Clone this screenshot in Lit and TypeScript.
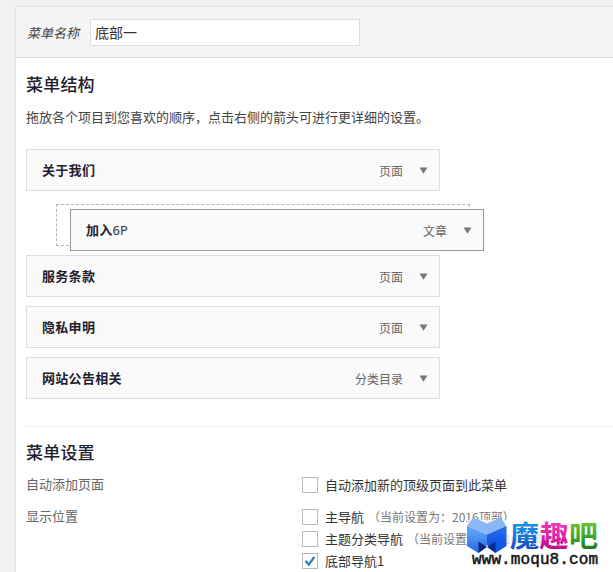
import { LitElement, html, css, svg } from "lit";
import { customElement, property } from "lit/decorators.js";
import { classMap } from "lit/directives/class-map.js";

@customElement("menu-item")
class MenuItem extends LitElement {
  @property() label = "";
  @property() suffix = "";
  @property() kind = "";
  @property({ type: Boolean }) dragging = false;

  static styles = css`
    :host { display: block; }
    .bar {
      box-sizing: border-box;
      display: flex;
      align-items: center;
      width: 414px;
      height: 42px;
      padding: 0 11px 0 15px;
      border: 1px solid #dedede;
      background: #fafafa;
    }
    .dragging { border-color: #999; }
    .title {
      flex: 1;
      font-size: 13px;
      font-weight: 700;
      letter-spacing: 0.3px;
      color: #23202e;
      line-height: 20px;
    }
    .suffix {
      font-family: "Noto Sans", sans-serif;
      font-weight: 400;
      letter-spacing: 0;
      color: #333;
    }
    .kind { font-size: 12px; line-height: 20px; color: #666; margin-right: 16px; padding-top: 1px; }
    .arrow { display: block; width: 9px; height: 7px; fill: #777; }
  `;

  render() {
    return html`<div class=${classMap({ bar: true, dragging: this.dragging })}>
      <span class="title">${this.label}<span class="suffix">${this.suffix}</span></span>
      <span class="kind">${this.kind}</span>
      <svg class="arrow" viewBox="0 0 9 7"><path d="M.5 .5h8L4.5 6.7z" /></svg>
    </div>`;
  }
}

@customElement("check-option")
class CheckOption extends LitElement {
  @property() label = "";
  @property() note = "";
  @property({ type: Boolean }) checked = false;

  static styles = css`
    :host { display: flex; align-items: center; height: 22px; white-space: nowrap; }
    .box {
      box-sizing: border-box;
      flex: none;
      width: 16px;
      height: 16px;
      border: 1px solid #b9b9b9;
      background: #fff;
      margin-right: 7px;
    }
    .box svg { display: block; width: 14px; height: 14px; }
    .label { font-size: 13px; line-height: 20px; color: #333; }
    .note { font-size: 12px; line-height: 20px; color: #777; margin-left: 4px; }
  `;

  render() {
    return html`<span class="box">${this.checked
        ? html`<svg viewBox="0 0 14 14"><path d="M2.5 6.8l3.2 3.8 5.6-7.6" fill="none" stroke="#2583b5" stroke-width="2.2" /></svg>`
        : ""}</span
      ><span class="label">${this.label}</span>${this.note ? html`<span class="note">${this.note}</span>` : ""}`;
  }
}

@customElement("site-mark")
class SiteMark extends LitElement {
  static styles = css`
    :host { display: block; }
    svg { display: block; overflow: visible; }
    .name { font: 700 29px "Noto Sans CJK SC", sans-serif; }
    .url { font: 16px "Liberation Mono", monospace; }
  `;

  render() {
    const stops = (id: string, from: string, mid: string, to: string) => svg`
      <linearGradient id=${id} x1="0" y1="0" x2="0" y2="1">
        <stop offset=".2" stop-color=${from} /><stop offset=".55" stop-color=${mid} /><stop offset=".9" stop-color=${to} />
      </linearGradient>`;
    return html`<svg width="146" height="56" viewBox="0 0 146 56">
      <defs>
        ${stops("blue", "#1b9be8", "#1373dc", "#1646bd")}
        ${stops("pink", "#ee3cbc", "#df20aa", "#b50a88")}
        ${stops("green", "#72c438", "#3ea52d", "#16751e")}
        ${stops("left", "#5a9ff3", "#4388ee", "#2a6de6")}
        ${stops("right", "#2468e6", "#1559e6", "#0c55e0")}
      </defs>
      <path d="M0 4H136V50H0z" fill="#fff" opacity=".72" />
      <path d="M0 10L6 1.5 20 7.500 33.500 1.500 39.500 10 20 18.500z" fill="#8bb8f5" />
      <path d="M0 10L20 18.500V29L11.500 37 0 30z" fill="url(#left)" />
      <path d="M39.500 10L20 18.500V29L28.500 37 39.500 30z" fill="url(#right)" />
      <path d="M11.500 25.500L20 31 11.500 37z" fill="#062680" />
      <path d="M28.500 25.500L20 31 28.500 37z" fill="#062d92" />
      <text class="name" x="43" y="31" fill="url(#blue)">魔</text>
      <text class="name" x="72.500" y="31" fill="url(#pink)">趣</text>
      <text class="name" x="102" y="31" fill="url(#green)">吧</text>
      <text class="url" x="5" y="48" textLength="126" fill="#111" stroke="#111" stroke-width=".5">www.moqu8.com</text>
    </svg>`;
  }
}

@customElement("app-root")
class AppRoot extends LitElement {
  static styles = css`
    :host {
      box-sizing: border-box;
      display: block;
      position: relative;
      width: 100%;
      height: 572px;
      overflow: hidden;
      padding: 6px 0 0 15px;
      background: #f1f1f1;
      font-family: "Noto Sans CJK SC", sans-serif;
      color: #444;
    }
    .panel { height: 600px; border: solid #e3e3e3; border-width: 1px 0 0 1px; background: #fff; }
    .head {
      box-sizing: border-box;
      display: flex;
      align-items: center;
      height: 51px;
      padding-left: 11px;
      border-bottom: 1px solid #dcdcdc;
      background: #f5f5f5;
    }
    .caption { font-size: 13px; font-style: italic; line-height: 20px; width: 63px; padding-top: 1px; }
    .field {
      box-sizing: border-box;
      width: 270px;
      height: 27px;
      border: 1px solid #ddd;
      background: #fff;
      padding: 0 4px;
      font: 14px/25px "Noto Sans CJK SC", sans-serif;
      color: #333;
    }
    .body { padding: 14px 0 0 10px; }
    h3 { margin: 0; font-size: 17px; font-weight: 500; line-height: 24px; color: #23202e; letter-spacing: 0.2px; }
    .hint { margin: 11px 0 22px; font-size: 13px; line-height: 20px; }
    .items { display: flex; flex-direction: column; gap: 9px; }
    .slot {
      position: relative;
      box-sizing: border-box;
      width: 414px;
      height: 42px;
      margin: 4px 0 0 30px;
      border: 1px dashed #b4b4b4;
    }
    .lifted { position: absolute; left: 13px; top: 4px; }
    .settings { margin-top: 27px; border-top: 1px solid #eee; padding-top: 13px; }
    .row { display: grid; grid-template-columns: 276px 1fr; font-size: 13px; line-height: 20px; color: #666; }
    .auto { margin-top: 10px; }
    .places { margin-top: 10px; }
    .mark { position: absolute; left: 467px; top: 516px; }
  `;

  render() {
    return html`
      <div class="panel">
        <div class="head">
          <label class="caption">菜单名称</label>
          <input class="field" .value=${"底部一"} />
        </div>
        <div class="body">
          <h3>菜单结构</h3>
          <p class="hint">拖放各个项目到您喜欢的顺序，点击右侧的箭头可进行更详细的设置。</p>
          <div class="items">
            <menu-item label="关于我们" kind="页面"></menu-item>
            <div class="slot">
              <menu-item class="lifted" label="加入" suffix="6P" kind="文章" dragging></menu-item>
            </div>
            <menu-item label="服务条款" kind="页面"></menu-item>
            <menu-item label="隐私申明" kind="页面"></menu-item>
            <menu-item label="网站公告相关" kind="分类目录"></menu-item>
          </div>
          <div class="settings">
            <h3>菜单设置</h3>
            <div class="row auto">
              <span>自动添加页面</span>
              <check-option label="自动添加新的顶级页面到此菜单"></check-option>
            </div>
            <div class="row places">
              <span>显示位置</span>
              <div>
                <check-option label="主导航" note="（当前设置为：2016顶部）"></check-option>
                <check-option label="主题分类导航" note="（当前设置为：2016顶部）"></check-option>
                <check-option label="底部导航1" checked></check-option>
              </div>
            </div>
          </div>
        </div>
      </div>
      <site-mark class="mark"></site-mark>
    `;
  }
}
